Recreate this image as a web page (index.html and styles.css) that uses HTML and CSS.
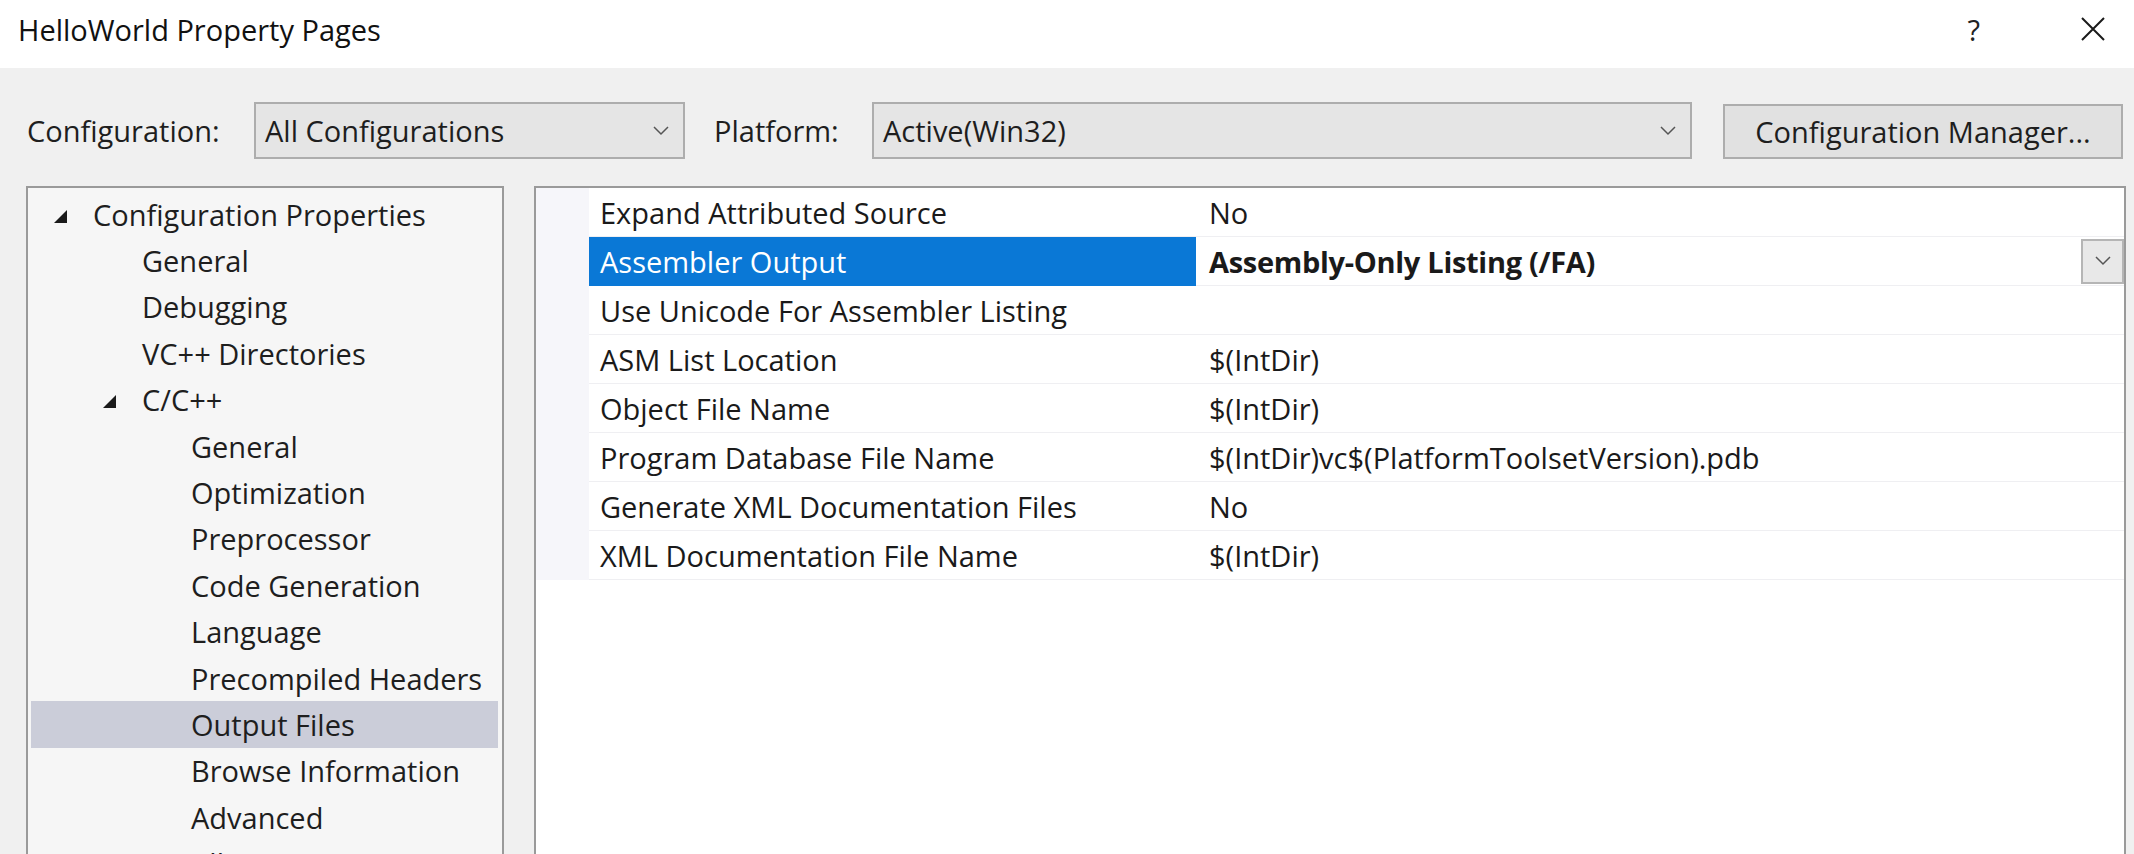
FILE: index.html
```html
<!DOCTYPE html>
<html>
<head>
<meta charset="utf-8">
<title>HelloWorld Property Pages</title>
<link rel="stylesheet" href="styles.css">
</head>
<body>
<div class="window">
  <div class="titlebar">
    <span class="title">HelloWorld Property Pages</span>
    <span class="help">?</span>
    <span class="close">
      <svg width="26" height="26" viewBox="0 0 26 26"><path d="M2 2 L24 24 M24 2 L2 24" stroke="#1a1a1a" stroke-width="2" fill="none"/></svg>
    </span>
  </div>
  <div class="content">
    <div class="toolbar">
      <span class="lbl lbl-config">Configuration:</span>
      <div class="combo combo-config">
        <span class="combo-text">All Configurations</span>
        <svg class="chev" width="16" height="10" viewBox="0 0 16 10"><path d="M1 1 L8 8 L15 1" stroke="#555" stroke-width="1.5" fill="none"/></svg>
      </div>
      <span class="lbl lbl-platform">Platform:</span>
      <div class="combo combo-platform">
        <span class="combo-text">Active(Win32)</span>
        <svg class="chev" width="16" height="10" viewBox="0 0 16 10"><path d="M1 1 L8 8 L15 1" stroke="#555" stroke-width="1.5" fill="none"/></svg>
      </div>
      <div class="btn">Configuration Manager...</div>
    </div>
    <div class="panels">
      <div class="tree">
        <div class="node l0"><span class="tog"><span class="tri"></span></span><span>Configuration Properties</span></div>
        <div class="node l1"><span class="tog"></span><span>General</span></div>
        <div class="node l1"><span class="tog"></span><span>Debugging</span></div>
        <div class="node l1"><span class="tog"></span><span>VC++ Directories</span></div>
        <div class="node l1"><span class="tog"><span class="tri"></span></span><span>C/C++</span></div>
        <div class="node l2"><span class="tog"></span><span>General</span></div>
        <div class="node l2"><span class="tog"></span><span>Optimization</span></div>
        <div class="node l2"><span class="tog"></span><span>Preprocessor</span></div>
        <div class="node l2"><span class="tog"></span><span>Code Generation</span></div>
        <div class="node l2"><span class="tog"></span><span>Language</span></div>
        <div class="node l2"><span class="tog"></span><span>Precompiled Headers</span></div>
        <div class="node l2 sel"><span class="tog"></span><span>Output Files</span></div>
        <div class="node l2"><span class="tog"></span><span>Browse Information</span></div>
        <div class="node l2"><span class="tog"></span><span>Advanced</span></div>
        <div class="node l2"><span class="tog"></span><span>All Options</span></div>
      </div>
      <div class="grid">
        <div class="row"><div class="gut"></div><div class="name">Expand Attributed Source</div><div class="val">No</div></div>
        <div class="row active"><div class="gut"></div><div class="name">Assembler Output</div><div class="val"><span class="bold">Assembly-Only Listing (/FA)</span><span class="dd"><svg width="16" height="10" viewBox="0 0 16 10"><path d="M1 1 L8 8 L15 1" stroke="#555" stroke-width="1.5" fill="none"/></svg></span></div></div>
        <div class="row"><div class="gut"></div><div class="name">Use Unicode For Assembler Listing</div><div class="val"></div></div>
        <div class="row"><div class="gut"></div><div class="name">ASM List Location</div><div class="val">$(IntDir)</div></div>
        <div class="row"><div class="gut"></div><div class="name">Object File Name</div><div class="val">$(IntDir)</div></div>
        <div class="row"><div class="gut"></div><div class="name">Program Database File Name</div><div class="val">$(IntDir)vc$(PlatformToolsetVersion).pdb</div></div>
        <div class="row"><div class="gut"></div><div class="name">Generate XML Documentation Files</div><div class="val">No</div></div>
        <div class="row"><div class="gut"></div><div class="name">XML Documentation File Name</div><div class="val">$(IntDir)</div></div>
      </div>
    </div>
  </div>
</div>
</body>
</html>
```

FILE: styles.css
```css
* { box-sizing: border-box; }
html, body {
  margin: 0;
  padding: 0;
  width: 2134px;
  height: 854px;
  overflow: hidden;
  background: #f0f0f0;
}
body {
  font-family: "Open Sans", "Lato", sans-serif;
  font-size: 29px;
  color: #1e1e1e;
}
.window {
  display: flex;
  flex-direction: column;
  height: 854px;
}
.titlebar {
  height: 68px;
  background: #ffffff;
  display: flex;
  align-items: center;
  padding: 0 28px 10px 18px;
  flex: none;
}
.title {
  flex: 1;
  color: #111;
}
.help {
  font-size: 29px;
  color: #222;
  margin-right: 100px;
}
.close { display: flex; }
.content {
  flex: 1;
  display: flex;
  flex-direction: column;
  min-height: 0;
}
.toolbar {
  display: flex;
  align-items: flex-end;
  margin-top: 34px;
  padding-left: 27px;
  flex: none;
}
.lbl {
  align-self: center;
  color: #1e1e1e;
}
.lbl-config { width: 227px; }
.lbl-platform { width: 158px; margin-left: 29px; }
.combo {
  height: 57px;
  background: #e5e5e5;
  border: 2px solid #adadad;
  display: flex;
  align-items: center;
  padding: 0 14px 0 9px;
}
.combo-text { flex: 1; }
.combo-config { width: 431px; }
.combo-platform { width: 820px; }
.btn {
  margin-left: 31px;
  width: 400px;
  height: 55px;
  background: #e1e1e1;
  border: 2px solid #adadad;
  display: flex;
  align-items: center;
  justify-content: center;
}
.panels {
  display: flex;
  gap: 30px;
  margin-top: 27px;
  padding-left: 26px;
  flex: 1;
  min-height: 0;
}
.tree {
  width: 478px;
  height: 720px;
  background: #f6f6f6;
  border: 2px solid #9a9a9a;
  padding-top: 3px;
  flex: none;
}
.node {
  height: 46.4px;
  display: flex;
  align-items: center;
  margin: 0 4px 0 3px;
  white-space: nowrap;
}
.node.l0 { padding-left: 13px; }
.node.l1 { padding-left: 62px; }
.node.l2 { padding-left: 111px; }
.node.sel { background: #cbcdd9; }
.tog {
  width: 32px;
  margin-right: 17px;
  display: flex;
  justify-content: center;
  align-items: center;
}
.tri {
  width: 0;
  height: 0;
  border-style: solid;
  border-width: 0 0 13px 13px;
  border-color: transparent transparent #1a1a1a transparent;
  margin-top: 4px;
}
.grid {
  width: 1592px;
  height: 720px;
  background: #ffffff;
  border: 2px solid #9a9a9a;
  flex: none;
}
.row {
  display: flex;
  height: 49px;
}
.gut {
  width: 53px;
  background: #f6f6fa;
  flex: none;
}
.name {
  width: 607px;
  flex: none;
  display: flex;
  align-items: center;
  padding-left: 11px;
  border-bottom: 1px solid #efeff2;
  color: #1a1a1a;
  white-space: nowrap;
}
.val {
  flex: 1;
  display: flex;
  align-items: center;
  padding-left: 13px;
  border-bottom: 1px solid #efeff2;
  color: #1a1a1a;
  white-space: nowrap;
}
.row.active .name {
  background: #0a78d6;
  color: #ffffff;
  border-bottom-color: #0a78d6;
}
.bold { font-weight: 700; flex: 1; letter-spacing: -0.3px; }
.dd {
  width: 43px;
  height: 45px;
  background: #e8e8e8;
  border: 2px solid #b5b5b5;
  display: flex;
  align-items: center;
  justify-content: center;
}
```
